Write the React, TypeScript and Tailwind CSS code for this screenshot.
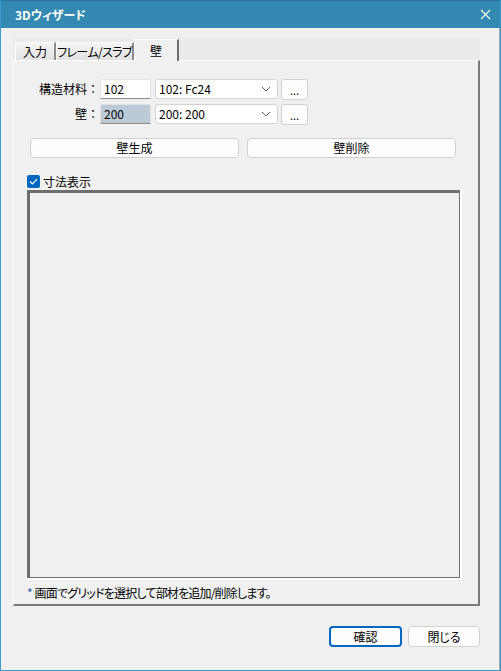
import React, { useState } from 'react';

const font = { fontFamily: '"Noto Sans CJK JP", "Noto Sans", sans-serif' };

const Chevron = () => (
  <svg width="10" height="6" viewBox="0 0 10 6" className="text-[#606060]">
    <path d="M1 1 L5 5 L9 1" fill="none" stroke="currentColor" strokeWidth="1" />
  </svg>
);

const FieldRow: React.FC<{ label: string; code: string; value: string; selected?: boolean }> = ({
  label,
  code,
  value,
  selected,
}) => (
  <div className="flex items-center h-[20px]">
    <div className="w-[86px] text-right pr-[1px] text-[12px] text-black [font-feature-settings:normal]">{label}</div>
    <div
      className={`w-[51px] h-[20px] flex items-center pl-[3px] text-[12px] border border-[#e3e3e3] border-b-[#8a8a8a] rounded-t-[2px] ${
        selected ? 'bg-[#bccad8]' : 'bg-white'
      }`}
    >
      {code}
    </div>
    <div className="ml-[4px] w-[123px] h-[20px] flex items-center justify-between pl-[3px] pr-[6px] text-[12px] bg-white border border-[#d4d4d4] rounded-[3px]">
      <span>{value}</span>
      <Chevron />
    </div>
    <button className="ml-[3px] w-[27px] h-[21px] flex items-end justify-center pb-[3px] text-[11px] leading-none bg-[#fdfdfd] border border-[#d0d0d0] rounded-[3px]">
      ...
    </button>
  </div>
);

export default function App() {
  const [showDims, setShowDims] = useState(true);
  const [tab] = useState(2);
  const tabs = ['入力', 'フレーム/スラブ', '壁'];

  return (
    <div
      className="w-[501px] h-[671px] flex flex-col bg-[#f0f0f0] border-x border-b border-[#3a9bd0] text-black [font-feature-settings:'palt']"
      style={font}
    >
      {/* Title bar */}
      <div className="h-[28px] shrink-0 bg-[#3389b1] border-t border-[#2b7098] flex items-center justify-between pl-[14px] pr-[9px]">
        <span className="text-[12px] font-bold text-white">3Dウィザード</span>
        <svg width="11" height="11" viewBox="0 0 11 11">
          <path d="M1 1 L10 10 M10 1 L1 10" stroke="white" strokeWidth="1.1" />
        </svg>
      </div>

      {/* Body */}
      <div className="flex-1 flex flex-col pl-[12px] pr-[19px] border-r border-[#a8a8a8]">
        {/* Tab strip */}
        <div className="mt-[10px] h-[22px] flex items-end bg-[#e9eaeb] pl-[2px]">
          {tabs.map((t, i) =>
            i === tab ? (
              <div
                key={t}
                className="relative z-10 -mb-px w-[45px] h-[22px] flex items-center justify-center text-[12px] bg-[#f0f0f0] border-t border-l border-white border-r-2 border-r-[#6f6f6f]"
              >
                {t}
              </div>
            ) : (
              <div
                key={t}
                className={`h-[18px] flex items-center justify-center whitespace-nowrap text-[12px] bg-gradient-to-b from-[#f4f4f4] to-[#e2e2e2] border-t border-l border-white border-r-2 border-r-[#8c8c8c] ${
                  i === 0 ? 'w-[41px]' : 'w-[78px] tracking-[-0.6px]'
                }`}
              >
                {t}
              </div>
            )
          )}
        </div>

        {/* Tab panel */}
        <div className="h-[546px] flex flex-col border-t border-l border-white border-r-2 border-r-[#7a7a7a] border-b-2 border-b-[#7a7a7a]">
          <div className="mt-[18px] flex flex-col gap-[5px]">
            <FieldRow label="構造材料：" code="102" value="102: Fc24" />
            <FieldRow label="壁：" code="200" value="200: 200" selected />
          </div>

          <div className="mt-[14px] ml-[16px] flex gap-[8px]">
            <button className="w-[209px] h-[20px] text-[12px] leading-none bg-[#fdfdfd] border border-[#d0d0d0] rounded-[4px]">
              壁生成
            </button>
            <button className="w-[209px] h-[20px] text-[12px] leading-none bg-[#fdfdfd] border border-[#d0d0d0] rounded-[4px]">
              壁削除
            </button>
          </div>

          <label className="mt-[16px] ml-[13px] flex items-center gap-[3px] h-[15px] text-[12px] cursor-pointer">
            <span
              onClick={() => setShowDims(!showDims)}
              className={`w-[13px] h-[13px] rounded-[2px] flex items-center justify-center ${
                showDims ? 'bg-[#0067c0]' : 'bg-white border border-[#555]'
              }`}
            >
              {showDims && (
                <svg width="9" height="7" viewBox="0 0 9 7">
                  <path d="M1 3.5 L3.4 5.8 L8 1.2" fill="none" stroke="white" strokeWidth="1.2" />
                </svg>
              )}
            </span>
            寸法表示
          </label>

          {/* Grid area */}
          <div className="mt-[1px] ml-[13px] w-[435px] h-[390px] border-r-2 border-b-2 border-white">
            <div className="w-full h-full bg-[#f0f0f0] border-t-[3px] border-l-[3px] border-[#6e6e6e] border-r border-b" />
          </div>

          <div className="mt-[4px] ml-[13px] text-[12px] flex items-center gap-[2px]">
            <span className="text-[#2a5db0]">*</span>
            <span className="tracking-[-0.8px]">画面でグリッドを選択して部材を追加/削除します。</span>
          </div>
        </div>

        {/* Footer buttons */}
        <div className="mt-[20px] flex justify-end gap-[6px]">
          <button className="w-[73px] h-[21px] text-[12px] leading-none bg-[#fdfdfd] border-2 border-[#0067c0] rounded-[4px]">
            確認
          </button>
          <button className="w-[72px] h-[21px] text-[12px] leading-none bg-[#fdfdfd] border border-[#d0d0d0] rounded-[4px]">
            閉じる
          </button>
        </div>
      </div>
    </div>
  );
}
